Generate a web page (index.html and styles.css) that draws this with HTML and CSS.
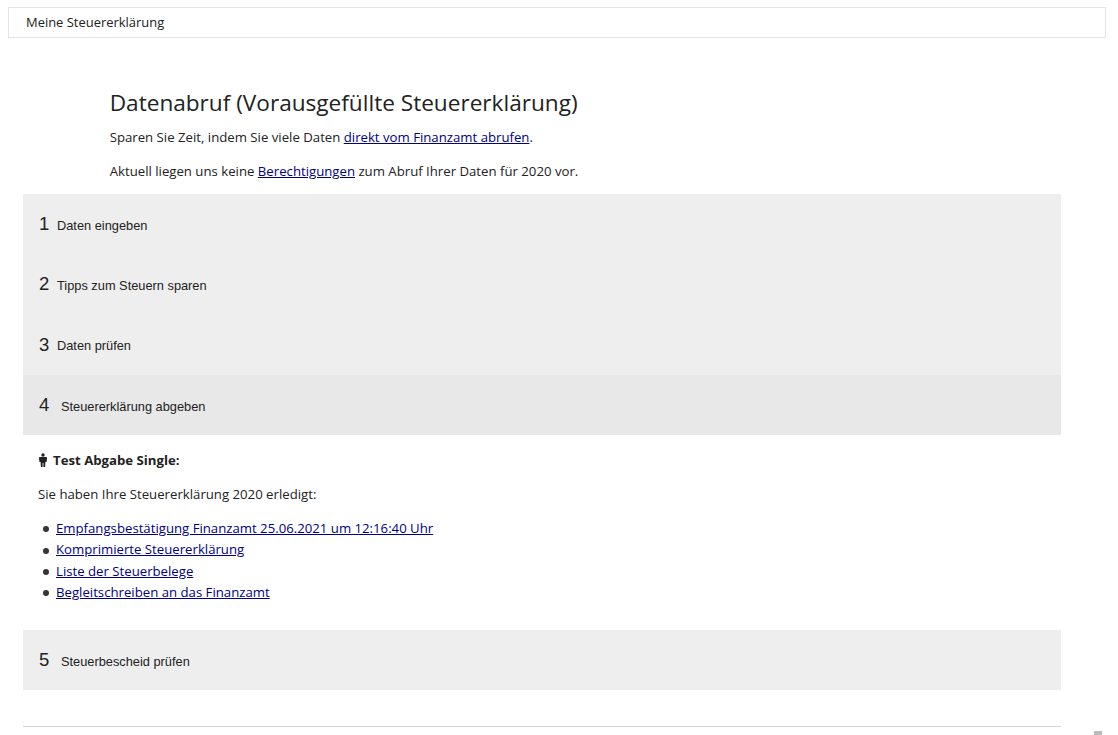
FILE: index.html
```html
<!DOCTYPE html>
<html lang="de">
<head>
<meta charset="utf-8">
<title>Meine Steuererklärung</title>
<link rel="stylesheet" href="styles.css">
</head>
<body>
<div class="topbar">Meine Steuererklärung</div>
<main class="main">
  <section class="intro">
    <h1>Datenabruf (Vorausgefüllte Steuererklärung)</h1>
    <p>Sparen Sie Zeit, indem Sie viele Daten <a href="#">direkt vom Finanzamt abrufen</a>.</p>
    <p>Aktuell liegen uns keine <a href="#">Berechtigungen</a> zum Abruf Ihrer Daten für 2020 vor.</p>
  </section>
  <div class="step"><span class="num">1</span><span class="label">Daten eingeben</span></div>
  <div class="step"><span class="num">2</span><span class="label">Tipps zum Steuern sparen</span></div>
  <div class="step"><span class="num">3</span><span class="label">Daten prüfen</span></div>
  <div class="step active"><span class="num">4</span><span class="label wide">Steuererklärung abgeben</span></div>
  <section class="panel">
    <p class="who"><svg class="person" viewBox="0 0 10 14" width="10" height="14"><circle cx="5" cy="2" r="1.7"/><path d="M1 5c0-.6.4-1 1-1h6c.6 0 1 .4 1 1L8.600 9H7.400L7.100 14H5.400V10H4.600V14H2.900L2.600 9H1.400z"/></svg><b>Test Abgabe Single:</b></p>
    <p class="done">Sie haben Ihre Steuererklärung 2020 erledigt:</p>
    <ul>
      <li><a href="#">Empfangsbestätigung Finanzamt 25.06.2021 um 12:16:40 Uhr</a></li>
      <li><a href="#">Komprimierte Steuererklärung</a></li>
      <li><a href="#">Liste der Steuerbelege</a></li>
      <li><a href="#">Begleitschreiben an das Finanzamt</a></li>
    </ul>
  </section>
  <div class="step last"><span class="num">5</span><span class="label wide">Steuerbescheid prüfen</span></div>
  <hr class="rule">
</main>
<div class="corner"></div>
</body>
</html>
```
FILE: styles.css
```css
html, body { margin: 0; padding: 0; height: 735px; overflow: hidden; background: #fff; }
body { font-family: "Open Sans", sans-serif; font-size: 13.2px; color: #222; padding: 7px 12px 0 8px; box-sizing: border-box; position: relative; }
.topbar { height: 31px; box-sizing: border-box; border: 1px solid #e4e4e4; padding-left: 17px; line-height: 29px; font-size: 12.95px; }
.main { padding: 0 45px 0 15px; }
.intro { padding: 49px 0 0 86.7px; }
h1 { margin: 0 0 10px; font-size: 22.6px; font-weight: 400; line-height: 31px; }
p { margin: 0; line-height: 18px; }
.intro p { margin-bottom: 16px; }
.intro p:last-child { margin-bottom: 14px; }
a { color: #000080; }
.step { height: 60.3px; background: #eee; display: flex; align-items: center; padding-left: 17px; font-family: "Liberation Sans", sans-serif; font-size: 12.8px; }
.step.active { background: #e8e8e8; }
.step.last { height: 60px; }
.num { font-size: 18.5px; width: 17px; margin-left: -1px; }
.label { padding-top: 2px; margin-left: 1px; }
.label.wide { margin-left: 5px; }
.panel { padding: 16px 15px 27px; }
.panel p { margin-bottom: 16px; }
.panel .done { margin-bottom: 15px; }
.who { display: flex; align-items: center; }
.person { fill: #222; margin-right: 5px; }
ul { margin: 0; padding: 0 0 0 5px; list-style: none; }
li { line-height: 21.3px; display: flex; align-items: center; gap: 7px; }
li::before { content: ""; width: 6px; height: 6px; border-radius: 50%; background: #333; flex: none; margin-top: 1px; }
.rule { margin: 36px 0 0; border: 0; border-top: 1px solid #d4d4d4; }
.corner { position: absolute; right: 16px; bottom: 0; width: 8px; height: 4px; background: #bbb; }
```
